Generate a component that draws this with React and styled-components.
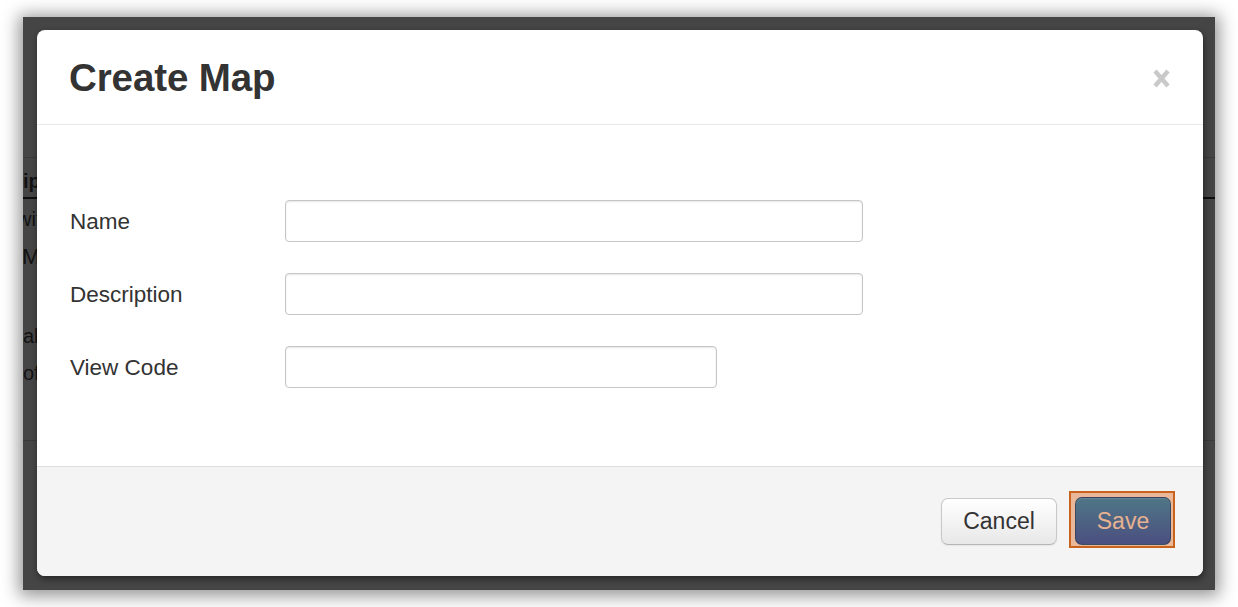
import React from "react";
import styled, { createGlobalStyle } from "styled-components";

const GlobalStyle = createGlobalStyle`
  html, body {
    margin: 0;
    padding: 0;
    background: #ffffff;
    width: 1238px;
    height: 607px;
    overflow: hidden;
  }
  * { box-sizing: border-box; }
`;

const Stage = styled.div`
  width: 1238px;
  height: 607px;
  padding: 17px 23px;
  font-family: "Liberation Sans", Arial, Helvetica, sans-serif;
`;

const Window = styled.div`
  position: relative;
  width: 100%;
  height: 100%;
  background: #454545;
  overflow: hidden;
  box-shadow: 0 2px 16px 4px rgba(0, 0, 0, 0.42);
`;

const Backdrop = styled.div`
  display: flex;
  flex-direction: column;
  padding-top: 140px;
  color: #121212;
  font-family: "Liberation Sans", Arial, sans-serif;
`;

const Rule = styled.div`
  height: ${(p) => p.$thick || 1}px;
  background: ${(p) => p.$color || "#3a3a3a"};
  margin-top: ${(p) => p.$gap || 0}px;
`;

const BgText = styled.div`
  height: ${(p) => p.$h}px;
  display: flex;
  align-items: flex-end;
  font-size: ${(p) => p.$size || 20}px;
  font-weight: ${(p) => (p.$bold ? 700 : 400)};
  margin-left: ${(p) => p.$shift || 0}px;
  line-height: 1;
  white-space: nowrap;
`;

const Modal = styled.div`
  position: absolute;
  top: 13px;
  left: 14px;
  right: 12px;
  bottom: 14px;
  display: flex;
  flex-direction: column;
  background: #ffffff;
  border-radius: 8px;
  box-shadow: 1px 3px 6px rgba(0, 0, 0, 0.45);
  overflow: hidden;
`;

const Header = styled.div`
  height: 95px;
  flex: none;
  display: flex;
  align-items: center;
  justify-content: space-between;
  padding: 2px 33px 0 32px;
  border-bottom: 1px solid #e8e8e8;
`;

const Title = styled.h3`
  margin: 0;
  font-size: 38.5px;
  font-weight: 700;
  color: #333333;
  letter-spacing: -0.1px;
`;

const CloseButton = styled.button`
  border: 0;
  padding: 0;
  background: transparent;
  width: 17px;
  height: 19px;
  display: flex;
  cursor: pointer;
  margin-top: 0;
`;

const Body = styled.div`
  flex: 1;
  padding: 75px 33px 0 33px;
  display: grid;
  grid-template-columns: 215px auto;
  grid-auto-rows: 42px;
  row-gap: 31px;
  align-content: start;
  align-items: center;
`;

const Label = styled.label`
  font-size: 22.5px;
  color: #333333;
  line-height: 1;
  padding-top: 3px;
`;

const TextInput = styled.input`
  width: ${(p) => p.$width}px;
  height: 42px;
  border: 1px solid #c6c6c6;
  border-radius: 4px;
  background: #ffffff;
  box-shadow: inset 0 1px 2px rgba(0, 0, 0, 0.1);
  font-family: inherit;
  font-size: 20px;
  padding: 0 10px;
  outline: none;
`;

const Footer = styled.div`
  height: 110px;
  flex: none;
  border-top: 1px solid #dddddd;
  background: #f4f4f4;
  display: flex;
  justify-content: flex-end;
  align-items: flex-start;
  gap: 12px;
  padding: 24px 28px 0 0;
`;

const CancelButton = styled.button`
  margin-top: 7px;
  width: 116px;
  height: 47px;
  border: 1px solid #c8c8c8;
  border-bottom-color: #b5b5b5;
  border-radius: 7px;
  background: linear-gradient(#ffffff, #e8e8e8);
  box-shadow: inset 0 1px 0 rgba(255, 255, 255, 0.3), 0 1px 2px rgba(0, 0, 0, 0.06);
  font-family: inherit;
  font-size: 23px;
  color: #333333;
  padding: 0;
`;

const FocusRing = styled.div`
  display: flex;
  border: 2px solid #c8621d;
  background: #eab898;
  padding: 4px 2px 1px 4px;
`;

const SaveButton = styled.button`
  width: 96px;
  height: 48px;
  border: 1px solid rgba(40, 50, 70, 0.55);
  border-radius: 7px;
  background: linear-gradient(#4f7686, #4b4f80);
  box-shadow: inset 0 1px 0 rgba(255, 255, 255, 0.12);
  font-family: inherit;
  font-size: 23px;
  color: #e7b291;
  padding: 0;
`;

function CloseIcon() {
  return (
    <svg width="17" height="19" viewBox="0 0 17 19">
      <path d="M2 2 L15 17 M15 2 L2 17" stroke="#c9c9c9" strokeWidth="4.4" strokeLinecap="butt" />
    </svg>
  );
}

export default function App() {
  return (
    <>
      <GlobalStyle />
      <Stage>
        <Window>
          <Backdrop aria-hidden="true">
            <Rule />
            <BgText $h={33} $size={20} $bold>ipsum</BgText>
            <Rule $thick={2} $color="#0e0e0e" $gap={6} />
            <BgText $h={30} $size={20} $shift={-6}>with</BgText>
            <BgText $h={39} $size={22} $shift={-1}>Map</BgText>
            <BgText $h={78} $size={20} $shift={0}>all</BgText>
            <BgText $h={37} $size={20} $shift={0}>of</BgText>
            <Rule $gap={57} />
          </Backdrop>
          <Modal>
            <Header>
              <Title>Create Map</Title>
              <CloseButton aria-label="Close">
                <CloseIcon />
              </CloseButton>
            </Header>
            <Body>
              <Label>Name</Label>
              <TextInput $width={578} />
              <Label>Description</Label>
              <TextInput $width={578} />
              <Label>View Code</Label>
              <TextInput $width={432} />
            </Body>
            <Footer>
              <CancelButton>Cancel</CancelButton>
              <FocusRing>
                <SaveButton>Save</SaveButton>
              </FocusRing>
            </Footer>
          </Modal>
        </Window>
      </Stage>
    </>
  );
}
